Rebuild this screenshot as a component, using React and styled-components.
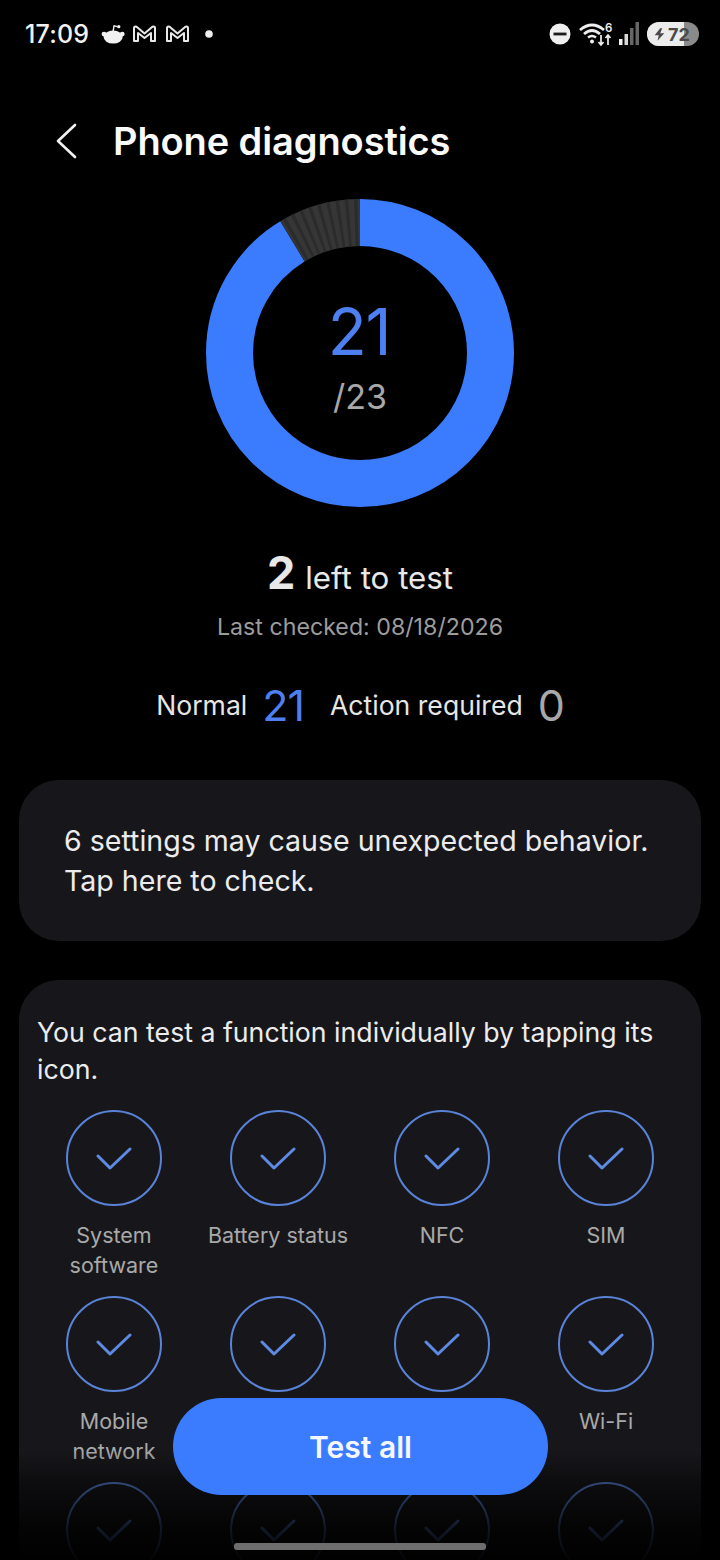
import React from "react";
import styled, { createGlobalStyle } from "styled-components";

const Global = createGlobalStyle`
  html, body { margin: 0; padding: 0; background: #000; }
  body { font-family: Inter, "Noto Sans", "Liberation Sans", sans-serif; }
`;

const Page = styled.div`
  position: relative;
  width: 720px;
  height: 1560px;
  overflow: hidden;
  background: #000;
  color: #f2f2f2;
`;

const StatusBar = styled.div`
  height: 68px;
  box-sizing: border-box;
  padding: 0 21px 0 25px;
  display: flex;
  align-items: center;
  justify-content: space-between;
`;

const StatusGroup = styled.div`
  display: flex;
  align-items: center;
`;

const Clock = styled.span`
  font-size: 25px;
  font-weight: 500;
  letter-spacing: 0.2px;
  color: #f1f1f1;
  margin-right: 12px;
`;

const BatteryPill = styled.div`
  position: relative;
  width: 52px;
  height: 24px;
  border-radius: 12px;
  overflow: hidden;
  background: #8a8a8a;
  display: flex;
  align-items: center;
  margin-left: 7px;
`;

const BatteryFill = styled.div`
  position: absolute;
  inset: 0 auto 0 0;
  background: #ececec;
`;

const BatteryContent = styled.div`
  position: relative;
  display: flex;
  align-items: center;
  gap: 3px;
  padding-left: 7px;
  font-size: 18px;
  font-weight: 700;
  color: #4a4a4a;
`;

const Header = styled.header`
  height: 48px;
  margin-top: 49px;
  display: flex;
  align-items: center;
  padding-left: 52px;
  gap: 33px;
`;

const Title = styled.h1`
  margin: 0;
  font-size: 38px;
  font-weight: 600;
  letter-spacing: -0.1px;
  color: #fafafa;
`;

const Donut = styled.div`
  position: relative;
  width: 308px;
  height: 308px;
  margin: 34px auto 0;
`;

const DonutCenter = styled.div`
  position: absolute;
  inset: 0;
  display: flex;
  flex-direction: column;
  align-items: center;
  padding: 97px 2px 0 0;
  box-sizing: border-box;
`;

const Score = styled.div`
  font-size: 64px;
  font-weight: 400;
  line-height: 72px;
  letter-spacing: -1.2px;
  color: #4d7ff0;
`;

const ScoreTotal = styled.div`
  font-size: 34px;
  font-weight: 400;
  line-height: 40px;
  margin: 9px 0 0 2px;
  color: #a8a8a8;
`;

const LeftLine = styled.div`
  margin-top: 38px;
  height: 56px;
  display: flex;
  align-items: baseline;
  justify-content: center;
  gap: 10px;
  font-size: 31.3px;
  color: #e8e8e8;
`;

const LeftCount = styled.span`
  font-size: 45px;
  font-weight: 700;
`;

const LastChecked = styled.div`
  text-align: center;
  font-size: 23.2px;
  line-height: 30px;
  margin-top: 11px;
  color: #9c9c9c;
`;

const Tally = styled.div`
  margin-top: 35px;
  height: 56px;
  display: flex;
  align-items: center;
  justify-content: center;
  font-size: 26.6px;
  color: #e6e6e6;
`;

const TallyValue = styled.span`
  font-size: 43px;
  font-weight: 400;
  letter-spacing: -1px;
  margin: 0 26px 0 15px;
  color: ${(p) => (p.$active ? "#4d7ff0" : "#a8a8a8")};
  &:last-child { margin-right: 0; }
`;

const NoticeCard = styled.div`
  margin: 47px 19px 0;
  height: 161px;
  box-sizing: border-box;
  padding: 41px 0 0 45px;
  border-radius: 40px;
  background: #17171b;
  font-size: 28.55px;
  line-height: 40px;
  color: #ececec;
`;

const TestsCard = styled.section`
  margin: 39px 19px 0;
  padding: 34px 0 0;
  height: 700px;
  box-sizing: border-box;
  border-radius: 40px;
  background: #17171b;
`;

const TestsIntro = styled.p`
  margin: 0;
  padding: 0 18px;
  font-size: 26.7px;
  line-height: 37px;
  color: #ececec;
`;

const TestGrid = styled.div`
  margin: 22px 0 0 13px;
  display: grid;
  grid-template-columns: repeat(4, 164px);
  grid-auto-rows: 186px;
`;

const TestItem = styled.div`
  display: flex;
  flex-direction: column;
  align-items: center;
`;

const TestCircle = styled.div`
  width: 96px;
  height: 96px;
  box-sizing: border-box;
  flex: none;
  border-radius: 50%;
  border: 2px solid #5a83d8;
  display: flex;
  align-items: center;
  justify-content: center;
  color: #5f8ae2;
`;

const TestLabel = styled.div`
  margin-top: 14px;
  width: 150px;
  text-align: center;
  font-size: 21.5px;
  line-height: 30.4px;
  color: #a9a9a9;
`;

const BottomFade = styled.div`
  position: absolute;
  left: 0;
  right: 0;
  bottom: 0;
  height: 110px;
  background: linear-gradient(
    to bottom,
    rgba(0, 0, 0, 0),
    rgba(0, 0, 0, 0.45) 30%,
    rgba(0, 0, 0, 0.82) 70%,
    rgba(0, 0, 0, 0.97)
  );
`;

const TestAllButton = styled.button`
  position: absolute;
  left: 173px;
  top: 1398px;
  width: 375px;
  height: 97px;
  border: 0;
  border-radius: 49px;
  background: #3b7cff;
  color: #f6f8ff;
  font-family: inherit;
  font-size: 30px;
  font-weight: 600;
`;

const HomeBar = styled.div`
  position: absolute;
  left: 234px;
  top: 1543px;
  width: 252px;
  height: 7px;
  border-radius: 3px;
  background: #6e6e6e;
`;

const RedditIcon = () => (
  <svg width="26" height="21" viewBox="0 0 30 24" fill="#f1f1f1" style={{ marginRight: 5 }}>
    <ellipse cx="14" cy="15" rx="11" ry="7.5" />
    <circle cx="3.5" cy="11.5" r="2.8" />
    <circle cx="24.5" cy="11.5" r="2.8" />
    <path d="M14 8 L15 2 L19 3" stroke="#f1f1f1" strokeWidth="1.6" fill="none" />
    <circle cx="20.5" cy="3" r="1.9" />
  </svg>
);

const GmailIcon = () => (
  <svg width="25" height="18" viewBox="0 0 25 18" fill="none" stroke="#e8e8e8" strokeWidth="2" style={{ marginRight: 8 }}>
    <path d="M2 16 V3 Q2 1.5 3.5 1.5 Q4.5 1.5 5.5 2.5 L12.5 8.5 L19.5 2.5 Q20.5 1.5 21.5 1.5 Q23 1.5 23 3 V16 H19 V8 L12.5 13 L6 8 V16 Z" strokeLinejoin="round" />
  </svg>
);

const DndIcon = () => (
  <svg width="22" height="22" viewBox="0 0 22 22">
    <circle cx="11" cy="11" r="10.5" fill="#efefef" />
    <rect x="4.5" y="9.6" width="13" height="2.8" fill="#1a1a1a" />
  </svg>
);

const WifiIcon = () => (
  <svg width="36" height="26" viewBox="0 0 36 26" fill="none" stroke="#efefef" style={{ marginLeft: 8 }}>
    <path d="M1 9 Q13 -1 25 9" strokeWidth="2.8" />
    <path d="M5 13 Q13 6 21 13" strokeWidth="2.8" />
    <path d="M9 16.5 Q13 13.5 17 16.5" strokeWidth="2.4" />
    <circle cx="13" cy="20.5" r="2" fill="#efefef" stroke="none" />
    <path d="M22 14 V24 M19.5 21 L22 24 L24.5 21" strokeWidth="1.7" />
    <path d="M29 24 V14 M26.5 17 L29 14 L31.5 17" strokeWidth="1.7" />
    <text x="26" y="11" fontSize="11.5" fontWeight="600" fill="#efefef" stroke="none" fontFamily="Inter, sans-serif">6</text>
  </svg>
);

const SignalIcon = () => (
  <svg width="22" height="24" viewBox="0 0 22 24" style={{ marginLeft: 3 }}>
    <rect x="1" y="17" width="3.5" height="6" fill="#efefef" />
    <rect x="6.5" y="12" width="3.5" height="11" fill="#d8d8d8" />
    <rect x="12" y="6" width="3.5" height="17" fill="#666" />
    <rect x="17.5" y="0" width="3.5" height="23" fill="#666" />
  </svg>
);

const BoltIcon = () => (
  <svg width="11" height="15" viewBox="0 0 16 18" fill="#4a4a4a">
    <path d="M9 0 L1 10 H7 L5 18 L15 7 H9 L12 0 Z" />
  </svg>
);

const BackIcon = () => (
  <svg width="28" height="40" viewBox="0 0 28 40" fill="none" stroke="#f2f2f2" strokeWidth="2.6" strokeLinecap="round" strokeLinejoin="round">
    <path d="M23 4 L6 20 L23 36" />
  </svg>
);

const CheckIcon = () => (
  <svg width="36" height="26" viewBox="0 0 36 26" fill="none" stroke="currentColor" strokeWidth="3" strokeLinecap="round" strokeLinejoin="round">
    <path d="M2 11 L14 23 L34 4" />
  </svg>
);

const DonutChart = () => {
  const r = 130.5;
  const c = 2 * Math.PI * r;
  const blue = (21 / 23) * c;
  const gray = Array.from({ length: 9 });
  return (
    <svg width="308" height="308" viewBox="0 0 308 308">
      <g transform="rotate(-90 154 154)" fill="none" strokeWidth="47">
        <circle cx="154" cy="154" r={r} stroke="#3b7cff" strokeDasharray={`${blue} ${c}`} />
        <circle cx="154" cy="154" r={r} stroke="#363636" strokeDasharray={`${c - blue} ${c}`} strokeDashoffset={-blue} />
        {gray.map((_, i) => (
          <circle
            key={i}
            cx="154"
            cy="154"
            r={r}
            stroke="#2b2b2b"
            strokeDasharray={`3 ${c}`}
            strokeDashoffset={-(blue + ((i + 0.5) * (c - blue)) / 9 - 1.5)}
          />
        ))}
      </g>
    </svg>
  );
};

const tests = [
  "System software", "Battery status", "NFC", "SIM",
  "Mobile network", "", "", "Wi-Fi",
  "", "", "", "",
];

export default function App() {
  return (
    <Page>
      <Global />
      <StatusBar>
        <StatusGroup>
          <Clock>17:09</Clock>
          <RedditIcon />
          <GmailIcon />
          <GmailIcon />
          <svg width="10" height="10" viewBox="0 0 10 10" style={{ marginLeft: 6 }}>
            <circle cx="5" cy="5" r="3.8" fill="#efefef" />
          </svg>
        </StatusGroup>
        <StatusGroup>
          <DndIcon />
          <WifiIcon />
          <SignalIcon />
          <BatteryPill>
            <BatteryFill style={{ width: "72%" }} />
            <BatteryContent>
              <BoltIcon />
              72
            </BatteryContent>
          </BatteryPill>
        </StatusGroup>
      </StatusBar>

      <Header>
        <BackIcon />
        <Title>Phone diagnostics</Title>
      </Header>

      <Donut>
        <DonutChart />
        <DonutCenter>
          <Score>21</Score>
          <ScoreTotal>/23</ScoreTotal>
        </DonutCenter>
      </Donut>

      <LeftLine>
        <LeftCount>2</LeftCount>
        <span>left to test</span>
      </LeftLine>
      <LastChecked>Last checked: 08/18/2026</LastChecked>

      <Tally>
        <span>Normal</span>
        <TallyValue $active>21</TallyValue>
        <span>Action required</span>
        <TallyValue>0</TallyValue>
      </Tally>

      <NoticeCard>
        6 settings may cause unexpected behavior.
        <br />
        Tap here to check.
      </NoticeCard>

      <TestsCard>
        <TestsIntro>You can test a function individually by tapping its icon.</TestsIntro>
        <TestGrid>
          {tests.map((label, i) => (
            <TestItem key={i}>
              <TestCircle>
                <CheckIcon />
              </TestCircle>
              <TestLabel>{label}</TestLabel>
            </TestItem>
          ))}
        </TestGrid>
      </TestsCard>

      <BottomFade />
      <TestAllButton>Test all</TestAllButton>
      <HomeBar />
    </Page>
  );
}
